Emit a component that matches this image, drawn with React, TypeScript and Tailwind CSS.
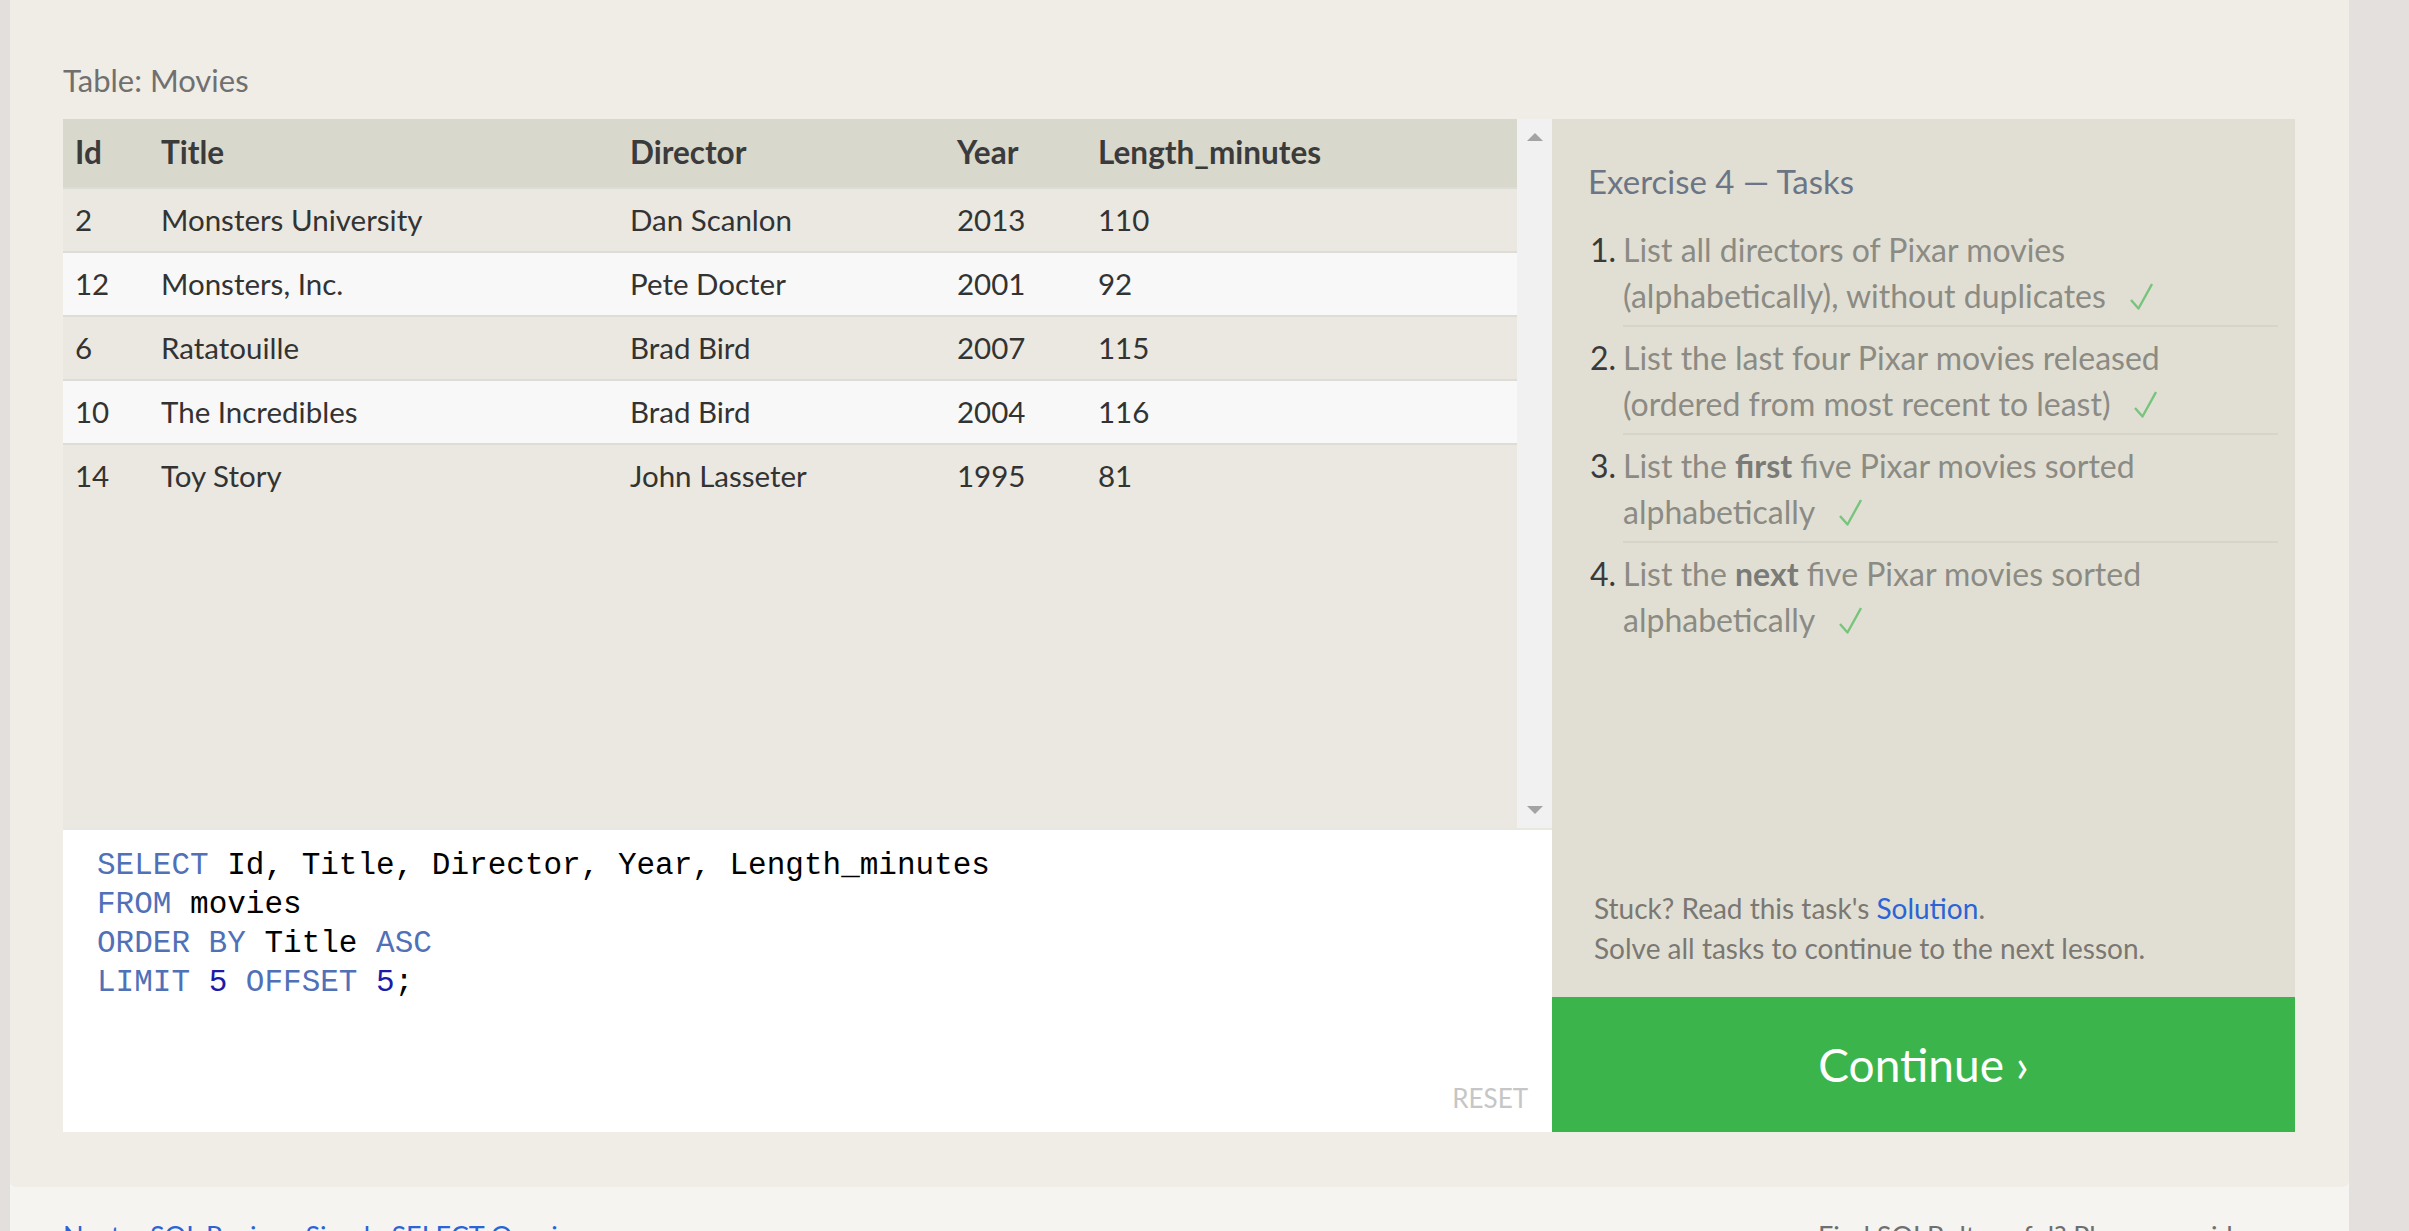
import React from 'react';

interface Movie {
  id: number;
  title: string;
  director: string;
  year: number;
  length: number;
}

const movies: Movie[] = [
  { id: 2, title: 'Monsters University', director: 'Dan Scanlon', year: 2013, length: 110 },
  { id: 12, title: 'Monsters, Inc.', director: 'Pete Docter', year: 2001, length: 92 },
  { id: 6, title: 'Ratatouille', director: 'Brad Bird', year: 2007, length: 115 },
  { id: 10, title: 'The Incredibles', director: 'Brad Bird', year: 2004, length: 116 },
  { id: 14, title: 'Toy Story', director: 'John Lasseter', year: 1995, length: 81 },
];

const Check = () => (
  <svg width="23" height="27" viewBox="0 0 23 27" className="inline-block ml-[24px] -mt-[6px] align-middle">
    <path d="M1 17 L8.5 25.5 L22 1" fill="none" stroke="#77c47d" strokeWidth="2.4" strokeLinejoin="round" />
  </svg>
);

const grid = 'grid grid-cols-[86px_469px_327px_141px_1fr] items-center pl-[12px]';

const TaskItem: React.FC<{ n: number; last?: boolean; children: React.ReactNode }> = ({ n, last, children }) => (
  <li className="flex">
    <span className="w-[33px] shrink-0 text-[#3a3a3a]">{n}.</span>
    <div className={`flex-1 pb-[6px] mb-[8px] ${last ? '' : 'border-b-2 border-[#d7d5ca]'}`}>{children}</div>
  </li>
);

const App: React.FC = () => {
  return (
    <div className="w-[2409px] h-[1231px] overflow-hidden flex bg-[#e4e0dd] font-['Lato',sans-serif]">
      <div className="w-[10px] shrink-0 bg-[#e3dfdc]" />

      <div className="w-[2339px] shrink-0 flex flex-col bg-[#f5f4f0]">
        {/* Lesson panel */}
        <div className="bg-[#f0ede6] rounded-b-[6px] pt-[60px] pl-[53px] pr-[54px] pb-[55px]">
          <div className="text-[31px] leading-[40px] text-[#707070] mb-[19px]">Table: Movies</div>

          <div className="flex h-[1013px]">
            {/* Table + editor */}
            <div className="w-[1489px] flex flex-col">
              <div className="h-[709px] flex bg-[#eae8e0]">
                <div className="flex-1 text-[29.5px] text-[#333]">
                  <div className={`${grid} h-[68px] bg-[#d9d8cc] font-bold text-[31.5px] text-[#3b3b3b]`}>
                    <span>Id</span>
                    <span>Title</span>
                    <span>Director</span>
                    <span>Year</span>
                    <span>Length_minutes</span>
                  </div>
                  {movies.map((m, i) => (
                    <div
                      key={m.id}
                      className={`${grid} h-[64px] border-t-2 border-[#dddcd7] ${i % 2 === 1 ? 'bg-[#f8f8f8]' : ''}`}
                    >
                      <span>{m.id}</span>
                      <span>{m.title}</span>
                      <span>{m.director}</span>
                      <span>{m.year}</span>
                      <span>{m.length}</span>
                    </div>
                  ))}
                </div>
                <div className="w-[35px] bg-[#f1f1f1] flex flex-col items-center justify-between pt-[14px] pb-[14px]">
                  <div className="w-0 h-0 border-l-[8px] border-r-[8px] border-b-[8px] border-l-transparent border-r-transparent border-b-[#a3a3a3]" />
                  <div className="w-0 h-0 border-l-[8px] border-r-[8px] border-t-[8px] border-l-transparent border-r-transparent border-t-[#a3a3a3]" />
                </div>
              </div>
              <div className="h-[2px] bg-[#e8e7e0]" />
              <div className="flex-1 bg-white flex flex-col pt-[16px] pl-[34px]">
                <pre className="font-['Liberation_Mono',monospace] text-[31px] leading-[39px] text-black">
                  <span className="text-[#5070b8]">SELECT</span> Id, Title, Director, Year, Length_minutes{'\n'}
                  <span className="text-[#5070b8]">FROM</span> movies{'\n'}
                  <span className="text-[#5070b8]">ORDER BY</span> Title <span className="text-[#5070b8]">ASC</span>{'\n'}
                  <span className="text-[#5070b8]">LIMIT</span> <span className="text-[#1c1ca8]">5</span>{' '}
                  <span className="text-[#5070b8]">OFFSET</span> <span className="text-[#1c1ca8]">5</span>;
                </pre>
                <div className="mt-auto self-end pr-[24px] pb-[17px] text-[26px] leading-[34px] text-[#c6c6c6]">RESET</div>
              </div>
            </div>

            {/* Tasks panel */}
            <div className="flex-1 flex flex-col">
              <div className="flex-1 bg-[#e1dfd4] flex flex-col pt-[42px] pl-[36px] pr-[17px] pb-[29px]">
                <div className="text-[33px] leading-[40px] text-[#6c7586]">Exercise 4 — Tasks</div>
                <ol className="mt-[26px] text-[32px] leading-[46px] text-[#8b8b84] pl-[2px]">
                  <TaskItem n={1}>
                    List all directors of Pixar movies (alphabetically), without duplicates
                    <Check />
                  </TaskItem>
                  <TaskItem n={2}>
                    List the last four Pixar movies released (ordered from most recent to least)
                    <Check />
                  </TaskItem>
                  <TaskItem n={3}>
                    List the <b className="text-[#7a7a76]">first</b> five Pixar movies sorted alphabetically
                    <Check />
                  </TaskItem>
                  <TaskItem n={4} last>
                    List the <b className="text-[#7a7a76]">next</b> five Pixar movies sorted alphabetically
                    <Check />
                  </TaskItem>
                </ol>
                <div className="mt-auto pl-[6px] text-[28px] leading-[40px] text-[#7b7873]">
                  <p>
                    Stuck? Read this task's <span className="text-[#2a64d6]">Solution</span>.
                  </p>
                  <p>Solve all tasks to continue to the next lesson.</p>
                </div>
              </div>
              <div className="h-[135px] bg-[#3bb54b] flex items-center justify-center text-white text-[46px]">
                Continue ›
              </div>
            </div>
          </div>
        </div>

        {/* Footer */}
        <div className="grid grid-cols-[1755px_minmax(0,1fr)] pt-[31px] pl-[53px] pr-[54px] text-[27px] leading-[36px] whitespace-nowrap">
          <span className="text-[#2a64d6]">Next – SQL Review: Simple SELECT Queries</span>
          <span className="text-[#6f6f6f] overflow-hidden">Find SQLBolt useful? Please consider</span>
        </div>
      </div>

      <div className="flex-1 bg-[#e4e0dd]" />
    </div>
  );
};

export default App;
